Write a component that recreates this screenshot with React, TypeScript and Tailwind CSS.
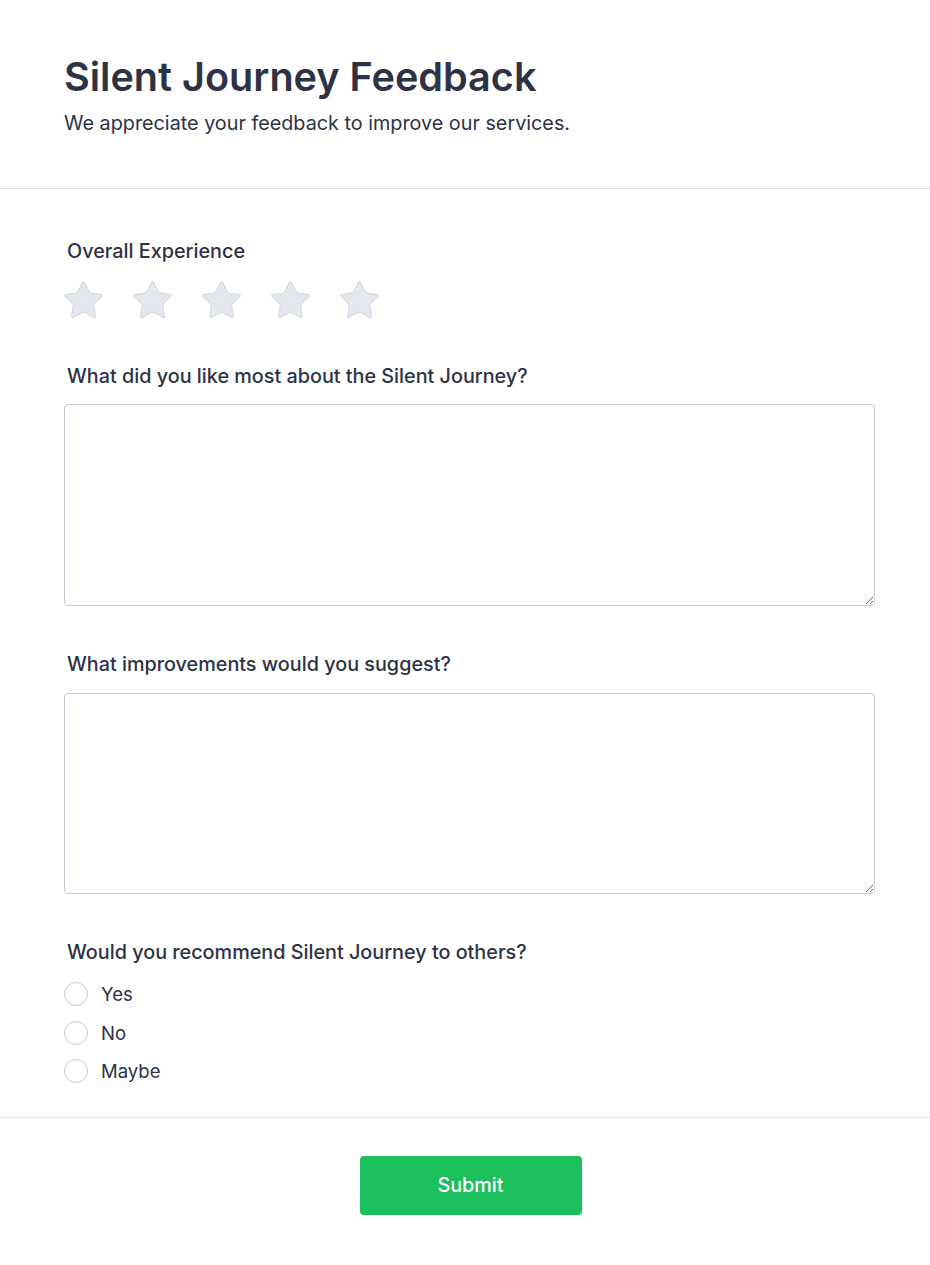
import React from 'react';

function Star() {
  return (
    <svg viewBox="1.6 1.6 20.8 20.8" className="w-[39px] h-[39px]" aria-hidden="true">
      <path
        d="M11.525 2.295a.53.53 0 0 1 .95 0l2.31 4.679a2.123 2.123 0 0 0 1.595 1.16l5.166.756a.53.53 0 0 1 .294.904l-3.736 3.638a2.123 2.123 0 0 0-.611 1.878l.882 5.14a.53.53 0 0 1-.771.56l-4.618-2.428a2.122 2.122 0 0 0-1.973 0L6.396 21.01a.53.53 0 0 1-.77-.56l.881-5.139a2.122 2.122 0 0 0-.611-1.879L2.16 9.795a.53.53 0 0 1 .294-.906l5.165-.755a2.122 2.122 0 0 0 1.597-1.16z"
        fill="#e5e7ef"
        stroke="#d5d8e2"
        strokeWidth="0.6"
        strokeLinejoin="round"
      />
    </svg>
  );
}

function Question({ children }: { children: React.ReactNode }) {
  return <label className="block px-[3px] text-[19.8px] font-medium leading-7 text-[#2d3245]">{children}</label>;
}

export default function App() {
  const options = ['Yes', 'No', 'Maybe'];

  return (
    <div className="min-h-[1265px] bg-white font-['Inter',sans-serif] text-[#2d3245]">
      <header className="px-16 pt-[55px] pb-[51px] border-b border-[#dfe1ec]">
        <h1 className="text-[39.6px] font-semibold leading-[44px]">Silent Journey Feedback</h1>
        <p className="mt-[10px] text-[19.8px] leading-7">We appreciate your feedback to improve our services.</p>
      </header>

      <form className="pl-16 pr-[55px]">
        <section className="pt-[48px]">
          <Question>Overall Experience</Question>
          <div className="mt-[16px] flex gap-[30px]">
            {[0, 1, 2, 3, 4].map((i) => (
              <button key={i} type="button" className="p-0">
                <Star />
              </button>
            ))}
          </div>
        </section>

        <section className="mt-[42px]">
          <Question>What did you like most about the Silent Journey?</Question>
          <textarea className="mt-[14px] block w-full h-[202px] rounded border border-[#c6c9d6] bg-white" />
        </section>

        <section className="mt-[44px]">
          <Question>What improvements would you suggest?</Question>
          <textarea className="mt-[15px] block w-full h-[201px] rounded border border-[#c6c9d6] bg-white" />
        </section>

        <section className="mt-[44px] pb-[34px]">
          <Question>Would you recommend Silent Journey to others?</Question>
          <div className="mt-[16px] flex flex-col gap-[14.5px]">
            {options.map((o) => (
              <label key={o} className="flex items-center gap-[13px] text-[18.5px] leading-6">
                <span className="w-6 h-6 rounded-full border border-[#c6c9d6] bg-white" />
                {o}
              </label>
            ))}
          </div>
        </section>
      </form>

      <footer className="border-t border-[#e2e4ee] pt-[38px] pb-[50px] flex justify-center">
        <button
          type="button"
          className="ml-[11px] w-[222px] h-[59px] rounded bg-[#1bbf5c] text-white text-[19.8px] font-medium"
        >
          Submit
        </button>
      </footer>
    </div>
  );
}
